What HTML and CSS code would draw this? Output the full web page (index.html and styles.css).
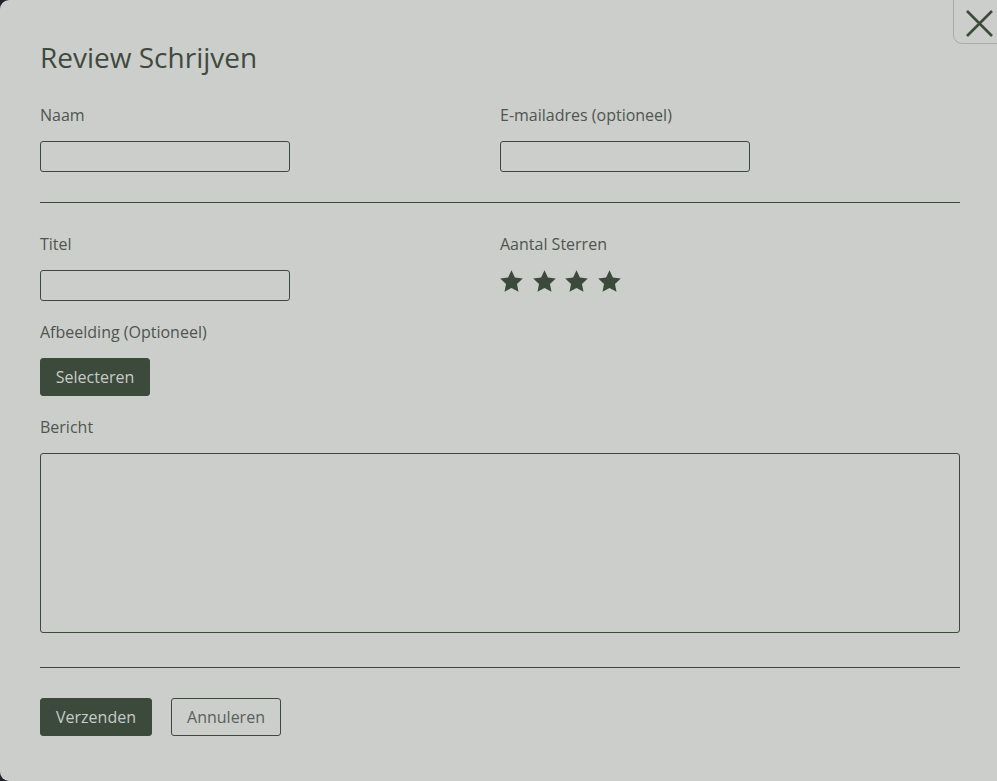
FILE: index.html
```html
<!DOCTYPE html>
<html lang="nl">
<head>
<meta charset="utf-8">
<title>Review Schrijven</title>
<link rel="stylesheet" href="styles.css">
</head>
<body>
<div class="modal">
  <h1 class="title">Review Schrijven</h1>
  <div class="row">
    <div class="field">
      <label class="label">Naam</label>
      <input class="input" type="text">
    </div>
    <div class="field">
      <label class="label">E-mailadres (optioneel)</label>
      <input class="input" type="text">
    </div>
  </div>
  <hr class="divider">
  <div class="row">
    <div class="field">
      <label class="label">Titel</label>
      <input class="input" type="text">
    </div>
    <div class="field">
      <label class="label">Aantal Sterren</label>
      <div class="stars">
        <svg class="star" viewBox="1.5 1.6 21 20"><path d="M12 1.8l3.1 6.6 7.2.9-5.3 5 1.4 7.1L12 17.9l-6.4 3.5 1.4-7.1-5.3-5 7.2-.9z"/></svg>
        <svg class="star" viewBox="1.5 1.6 21 20"><path d="M12 1.8l3.1 6.6 7.2.9-5.3 5 1.4 7.1L12 17.9l-6.4 3.5 1.4-7.1-5.3-5 7.2-.9z"/></svg>
        <svg class="star" viewBox="1.5 1.6 21 20"><path d="M12 1.8l3.1 6.6 7.2.9-5.3 5 1.4 7.1L12 17.9l-6.4 3.5 1.4-7.1-5.3-5 7.2-.9z"/></svg>
        <svg class="star" viewBox="1.5 1.6 21 20"><path d="M12 1.8l3.1 6.6 7.2.9-5.3 5 1.4 7.1L12 17.9l-6.4 3.5 1.4-7.1-5.3-5 7.2-.9z"/></svg>
      </div>
    </div>
  </div>
  <label class="label label-gap">Afbeelding (Optioneel)</label>
  <button class="btn btn-primary">Selecteren</button>
  <label class="label label-gap">Bericht</label>
  <textarea class="textarea"></textarea>
  <hr class="divider divider-bottom">
  <div class="actions">
    <button class="btn btn-primary btn-send">Verzenden</button>
    <button class="btn btn-outline">Annuleren</button>
  </div>
</div>
<button class="close" aria-label="Sluiten">
  <svg viewBox="0 0 30 30" width="30" height="30"><path d="M2 2L27 27M27 2L2 27" stroke="#3c4a3c" stroke-width="2.6" fill="none"/></svg>
</button>
</body>
</html>
```

FILE: styles.css
```css
html, body {
  margin: 0;
  padding: 0;
  height: 100%;
  overflow: hidden;
}
body {
  background: #1d222c;
  font-family: "Open Sans", "Liberation Sans", sans-serif;
  color: #4d534d;
  position: relative;
}
.modal {
  box-sizing: border-box;
  width: 1020px;
  height: 781px;
  background: #cccecb;
  border-radius: 9px;
  padding: 37px 0 0 40px;
}
.title {
  margin: 0;
  font-family: "Open Sans", sans-serif;
  font-weight: 400;
  font-size: 28px;
  line-height: 40px;
  color: #3f4a40;
  letter-spacing: 0;
}
.row {
  display: grid;
  grid-template-columns: 460px 460px;
}
.row:first-of-type { margin-top: 26px; }
.field {
  display: flex;
  flex-direction: column;
  align-items: flex-start;
}
.label {
  display: block;
  font-size: 16px;
  line-height: 24px;
  margin-bottom: 14px;
  color: #4f554f;
}
.label-gap { margin-top: 19px; }
.input {
  box-sizing: border-box;
  width: 250px;
  height: 31px;
  margin: 0;
  border: 1px solid #3c4a3c;
  border-radius: 3px;
  background: transparent;
}
.divider {
  width: 920px;
  margin: 30px 0 29px;
  border: 0;
  border-top: 1px solid #3c4a3c;
  height: 0;
}
.divider-bottom { margin: 34px 0 30px; }
.stars {
  display: flex;
  gap: 9.5px;
  height: 22px;
  align-items: flex-start;
}
.star {
  width: 23px;
  height: 22px;
  fill: #3c4a3c;
}
.btn {
  box-sizing: border-box;
  height: 38px;
  padding: 0 15px;
  border-radius: 3px;
  font-family: "Open Sans", sans-serif;
  font-size: 16px;
  line-height: 36px;
  cursor: pointer;
  display: block;
}
.btn-primary {
  background: #3c4a3c;
  border: 1px solid #3c4a3c;
  color: #c8cbc7;
  width: 110px;
  padding: 0;
}
.btn-send { width: 112px; }
.btn-outline {
  background: transparent;
  border: 1px solid #3c4a3c;
  color: #5a605a;
  width: 110px;
  padding: 0;
}
.textarea {
  box-sizing: border-box;
  display: block;
  width: 920px;
  height: 180px;
  margin: 0;
  border: 1px solid #3c4a3c;
  border-radius: 3px;
  background: transparent;
  resize: none;
}
.actions {
  display: flex;
  gap: 19px;
}
.close {
  position: absolute;
  top: -1px;
  left: 953px;
  width: 60px;
  height: 45px;
  box-sizing: border-box;
  padding: 9px 0 0 11px;
  margin: 0;
  background: #cccecb;
  border: 1px solid #a9aca8;
  border-bottom-left-radius: 9px;
  display: flex;
  align-items: flex-start;
}
.close svg { display: block; }
```
